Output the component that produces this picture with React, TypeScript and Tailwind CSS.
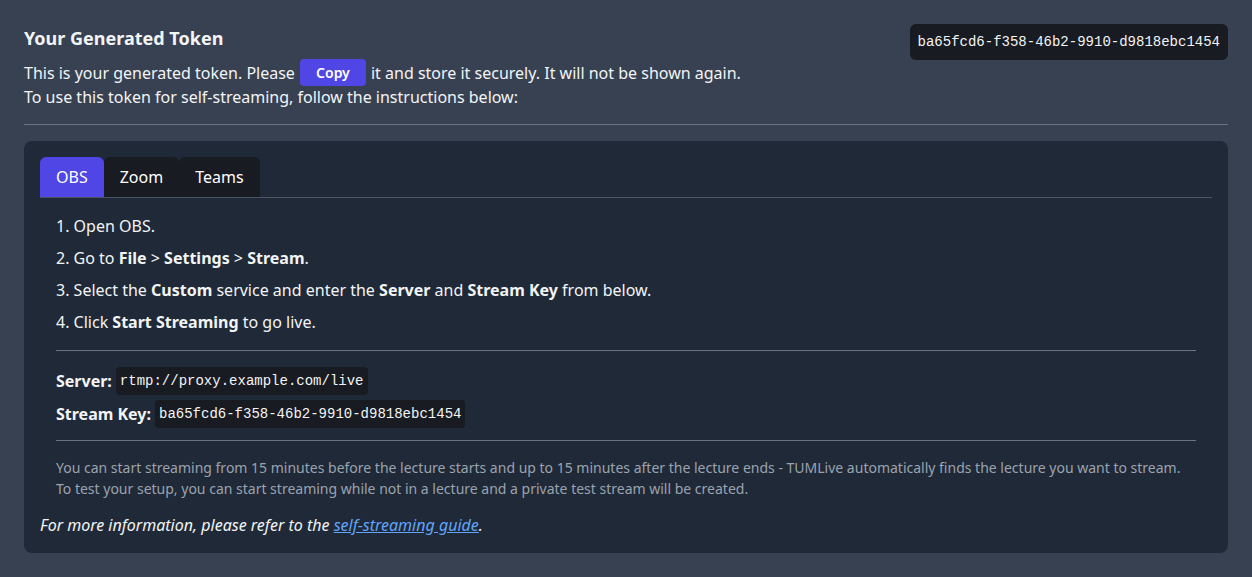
import React from "react";

export default function App() {
  const mono = { fontFamily: '"Liberation Mono", "DejaVu Sans Mono", monospace' };
  return (
    <div className="min-h-[577px] w-full bg-[#374151] text-[#f3f4f6] px-6 py-6" style={{ fontFamily: '"Noto Sans", "Open Sans", sans-serif' }}>
      <div className="flex justify-between items-start">
        <div>
          <h2 className="text-[18px] font-bold leading-[28px]">Your Generated Token</h2>
          <p className="text-[16px] leading-[24px] mt-[9px]">
            This is your generated token. Please{" "}
            <button className="inline-block relative -top-[2px] bg-[#4f46e5] text-white text-[14px] font-semibold rounded px-4 h-[27px] leading-[27px] align-middle -my-[4px] mx-[1px]">Copy</button>{" "}
            it and store it securely. It will not be shown again.
          </p>
          <p className="text-[16px] leading-[24px]">To use this token for self-streaming, follow the instructions below:</p>
        </div>
        <div className="bg-[#181b21] rounded-md px-2 h-[36px] flex items-center text-[14px]" style={mono}>
          ba65fcd6-f358-46b2-9910-d9818ebc1454
        </div>
      </div>
      <hr className="border-0 border-t border-[#6b7280] mt-[15px]" />
      <div className="bg-[#1f2937] rounded-lg mt-4 p-4">
        <div className="flex border-b border-[#4b5563]">
          <button className="bg-[#4f46e5] text-white text-[16px] px-4 h-[40px] rounded-t-md">OBS</button>
          <button className="bg-[#181b21] text-white text-[16px] px-4 h-[40px] rounded-t-md">Zoom</button>
          <button className="bg-[#181b21] text-white text-[16px] px-4 h-[40px] rounded-t-md">Teams</button>
        </div>
        <div className="px-4 pt-[16px]">
          <ol className="text-[16px] leading-[24px] flex flex-col gap-2">
            <li>1. Open OBS.</li>
            <li>2. Go to <b>File</b> &gt; <b>Settings</b> &gt; <b>Stream</b>.</li>
            <li>3. Select the <b>Custom</b> service and enter the <b>Server</b> and <b>Stream Key</b> from below.</li>
            <li>4. Click <b>Start Streaming</b> to go live.</li>
          </ol>
          <hr className="border-0 border-t border-[#6b7280] mt-4" />
          <div className="mt-4 flex flex-col gap-[5px] text-[16px]">
            <div className="flex items-center gap-[4px]">
              <b>Server:</b>
              <span className="bg-[#181b21] rounded px-[4px] h-[28px] flex items-center text-[14px]" style={mono}>rtmp://proxy.example.com/live</span>
            </div>
            <div className="flex items-center gap-[4px]">
              <b>Stream Key:</b>
              <span className="bg-[#181b21] rounded px-[4px] h-[28px] flex items-center text-[14px]" style={mono}>ba65fcd6-f358-46b2-9910-d9818ebc1454</span>
            </div>
          </div>
          <hr className="border-0 border-t border-[#6b7280] mt-[12px]" />
          <p className="text-[14px] leading-[21px] text-[#9ca3af] mt-4">
            You can start streaming from 15 minutes before the lecture starts and up to 15 minutes after the lecture ends - TUMLive automatically finds the lecture you want to stream.
            <br />
            To test your setup, you can start streaming while not in a lecture and a private test stream will be created.
          </p>
        </div>
        <p className="italic text-[16px] leading-[24px] mt-[14px]">
          For more information, please refer to the <a className="text-[#60a5fa] underline" href="#">self-streaming guide</a>.
        </p>
      </div>
    </div>
  );
}
